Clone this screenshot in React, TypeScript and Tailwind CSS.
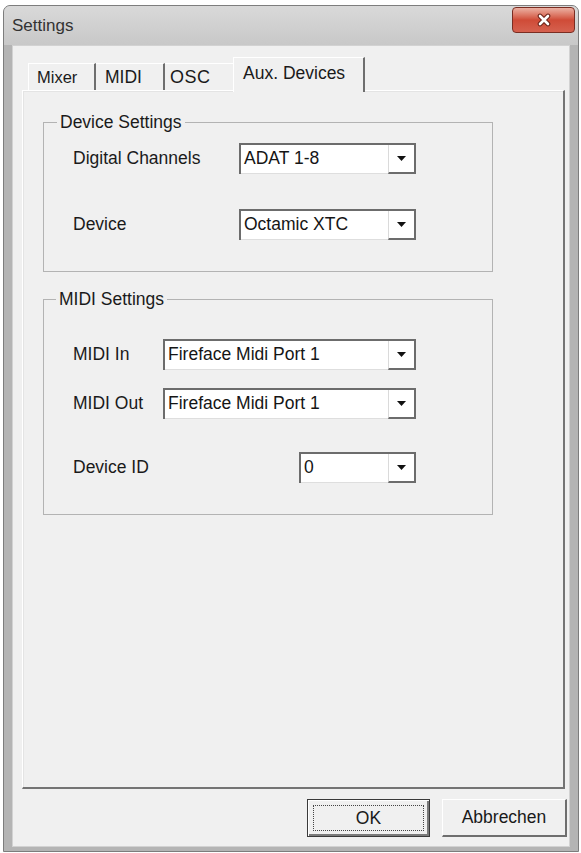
import React from "react";

const FONT = { fontFamily: '"Liberation Sans", Arial, sans-serif' };

function Combo({ w, value }: { w: string; value: string }) {
  return (
    <div className={`${w} h-[31px] flex border-t-2 border-l-2 border-[#6c6c6c] bg-white`}>
      <div className="flex-1 flex items-center pl-[3px] border-b border-[#dedede] text-[17.5px] leading-none text-[#151515] whitespace-nowrap">
        {value}
      </div>
      <div className="w-[28px] flex items-center justify-center bg-white border-l border-[#dadada] border-r-2 border-b-2 border-r-[#6c6c6c] border-b-[#6c6c6c]">
        <svg width="9" height="5" viewBox="0 0 9 5">
          <path d="M0 0H9L4.5 5Z" fill="#111" />
        </svg>
      </div>
    </div>
  );
}

function Row({ label, lw, cw, value, mt }: { label: string; lw: string; cw: string; value: string; mt: string }) {
  return (
    <div className={`flex items-center ${mt}`}>
      <div className={`${lw} text-[17.5px] text-[#1a1a1a] whitespace-nowrap`}>{label}</div>
      <Combo w={cw} value={value} />
    </div>
  );
}

export default function App() {
  return (
    <div className="w-[581px] h-[853px] bg-white pt-[5px] pl-[3px] overflow-hidden" style={FONT}>
      <div className="relative w-[576px] h-[847px] rounded-t-[7px] border border-[#7d7d7d] bg-[#b4b4b4] flex flex-col">
        <div className="h-[39px] shrink-0 rounded-t-[6px] bg-gradient-to-b from-[#d9d9d9] to-[#c8c8c8] flex items-center pl-[8px]">
          <span className="text-[17px] text-[#333333]">Settings</span>
        </div>
        <div className="absolute right-[3px] top-[1px] w-[63px] h-[26px] rounded-[4px] border border-[#7a2d22] bg-gradient-to-b from-[#eab0a3] via-[#cf4b37] to-[#d5614f] flex items-center justify-center">
          <svg width="16" height="14" viewBox="0 0 16 14">
            <path d="M4 3L12 11M12 3L4 11" stroke="#6a2218" strokeWidth="4.6" strokeLinecap="round" />
            <path d="M4 3L12 11M12 3L4 11" stroke="#ffffff" strokeWidth="2.6" strokeLinecap="round" />
          </svg>
        </div>

        <div className="flex-1 mx-[8px] mb-[4px] border border-[#d2d2d2] bg-[#f0f0f0] flex flex-col pt-[11px] pl-[9px] pr-[2px]">
          {/* tabs */}
          <div className="h-[33px] flex items-end pl-[6px]">
            <div className="w-[68px] h-[27px] flex items-center pl-[8px] border-t border-l border-white border-r-2 border-r-[#6e6e6e] text-[16.5px] text-[#1a1a1a]">
              Mixer
            </div>
            <div className="w-[69px] h-[27px] flex items-center pl-[9px] border-t border-white border-r-2 border-r-[#6e6e6e] text-[17.5px] text-[#1a1a1a]">
              MIDI
            </div>
            <div className="w-[68px] h-[27px] flex items-center pl-[5px] border-t border-white text-[18px] text-[#1a1a1a] tracking-[0.5px]">
              OSC
            </div>
            <div className="relative z-10 w-[132px] h-[35px] -mb-[2px] flex items-start pt-[2px] pl-[9px] bg-[#f0f0f0] border-t border-l border-white border-r-2 border-r-[#6e6e6e] text-[17.5px] text-[#1a1a1a] whitespace-nowrap">
              Aux. Devices
            </div>
          </div>

          {/* panel */}
          <div className="w-[543px] h-[699px] border-t border-l border-white border-r-2 border-b-2 border-r-[#747474] border-b-[#747474] shadow-[inset_1px_1px_0_#e4e4e4] pl-[20px] pt-[21px]">
            <fieldset className="w-[450px] h-[160px] border border-[#b3b3b3] m-0 p-0">
              <legend className="ml-[13px] px-[3px] text-[17.5px] leading-[20px] text-[#1a1a1a]">Device Settings</legend>
              <div className="pl-[29px] pt-[11px]">
                <Row label="Digital Channels" lw="w-[166px]" cw="w-[177px]" value="ADAT 1-8" mt="mt-0" />
                <Row label="Device" lw="w-[166px]" cw="w-[177px]" value="Octamic XTC" mt="mt-[35px]" />
              </div>
            </fieldset>

            <fieldset className="w-[450px] h-[226px] mt-[17px] border border-[#b3b3b3] m-0 p-0">
              <legend className="ml-[12px] px-[3px] text-[17.5px] leading-[20px] text-[#1a1a1a]">MIDI Settings</legend>
              <div className="pl-[29px] pt-[30px]">
                <Row label="MIDI In" lw="w-[90px]" cw="w-[253px]" value="Fireface Midi Port 1" mt="mt-0" />
                <Row label="MIDI Out" lw="w-[90px]" cw="w-[253px]" value="Fireface Midi Port 1" mt="mt-[18px]" />
                <Row label="Device ID" lw="w-[226px]" cw="w-[117px]" value="0" mt="mt-[33px]" />
              </div>
            </fieldset>
          </div>

          {/* buttons */}
          <div className="flex justify-end gap-[12px] mt-[10px]">
            <div className="w-[123px] h-[38px] flex border border-[#3a3a3a] bg-[#f0f0f0] shadow-[inset_1px_1px_0_#ffffff,inset_-2px_-2px_0_#7a7a7a]">
              <div className="flex-1 m-[5px] border border-dotted border-[#444] flex items-center justify-center text-[17.5px] text-[#1a1a1a]">
                OK
              </div>
            </div>
            <div className="w-[125px] h-[38px] flex items-center justify-center bg-[#f0f0f0] border-t border-l border-white border-r-2 border-b-2 border-r-[#6e6e6e] border-b-[#6e6e6e] text-[17.5px] text-[#1a1a1a]">
              Abbrechen
            </div>
          </div>
        </div>
      </div>
    </div>
  );
}
